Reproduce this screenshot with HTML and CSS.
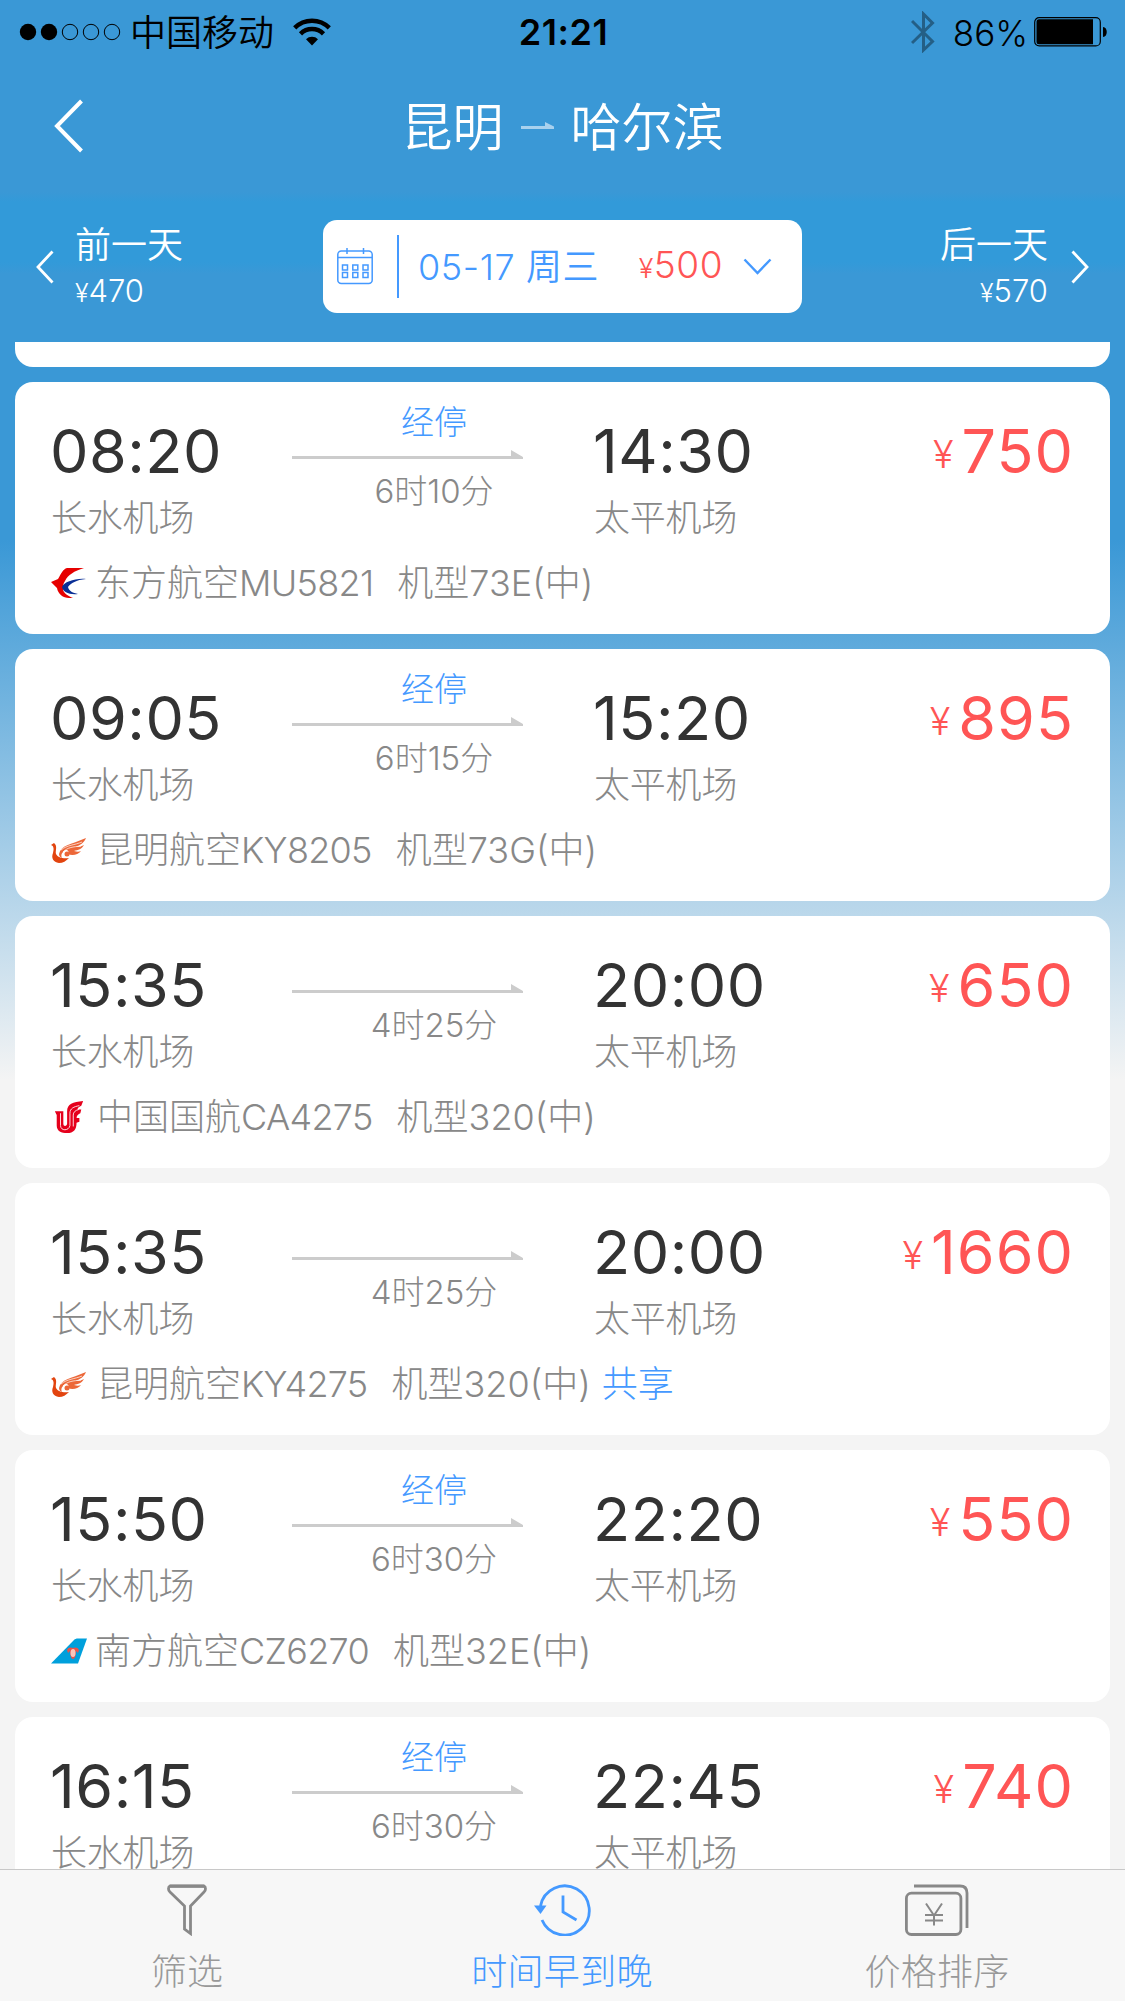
FILE: index.html
```
<!DOCTYPE html>
<html lang="zh-CN">

<head>
    <meta charset="UTF-8">
    <title>昆明 - 哈尔滨</title>
    <link rel="stylesheet" href="styles.css">
</head>

<body>
    <!-- 公用图标 -->
    <svg class="sprite" width="0" height="0">
        <symbol id="arrow" viewBox="0 0 231 9">
            <path d="M0 6h219V0l12 7V9H0z" fill="#ccc" />
        </symbol>
        <symbol id="logo-mu" viewBox="0 0 36 32">
            <path d="M33 1H16c-4 1-6 6-9 11l-7 3 6 6c1 6 6 10 12 10h4c-5-2-10-5-10-9 0-3 0-5 2-8 3-6 9-10 19-13z" fill="#e60000" />
            <path d="M35 12c-11-1-22 3-24 8 1 5 7 8 16 7-5-1-9-3-10-7 3-4 8-7 18-8z" fill="#0a2f96" />
        </symbol>
        <symbol id="logo-ky" viewBox="0 0 36 26">
            <path d="M0 8l3-2c4 3 1 8 2 11 2 4 8 5 13 4-3 3-6 5-10 5-6-1-8-5-6-10 1-4 1-7-2-8z" fill="#e2440f" />
            <path d="M8 17C10 8 19 8 35 1c-2 5-6 7-10 9 3 0 6-1 8-2-2 4-6 5-10 6 3 1 5 1 7 0-3 4-9 5-13 3 2-3-2-6-5-2-2 2-2 4-1 6-2-1-3-2-3-4z" fill="#ec6738" />
            <circle cx="16" cy="17" r="2.500" fill="#ec6738" />
            <path d="M10 13C16 8 24 8 31 5M12 15c5-5 10-5 18-6" fill="none" stroke="#fff" stroke-width=".7" />
        </symbol>
        <symbol id="logo-ca" viewBox="0 0 32 36">
            <path d="M31 1C20 2 14 4 14 12v13c0 3-4 4-4 0V12H1l2 4v11c0 6 5 8 11 8 7 0 10-4 10-11l3-1v-4h-3c0-3 2-4 4-5l1-4h-4c0-2 2-3 4-4z" fill="#e5001c" />
            <path d="M7 14v13c0 6 9 6 10 0V14c0-5 4-7 10-8M20.500 28V16c0-3 2-5 6-6" fill="none" stroke="#fff" stroke-width=".9" />
        </symbol>
        <symbol id="logo-cz" viewBox="0 0 36 26">
            <path d="M0 25.500L23 2c1-1 2-1.500 4-1.500h9l-9 25z" fill="#00a0dc" />
            <path d="M16 12c1-3 4-3 6-2 2-1 5-1 6 2l-1 3-2-2c0 4-1 8-3 8s-3-4-3-8l-2 2z" fill="#e8524a" />
            <ellipse cx="22" cy="15" rx="2.500" ry="4" fill="#f9c5bb" />
        </symbol>
    </svg>

    <div class="app">
        <!-- 状态栏 -->
        <div class="status-bar">
            <div class="status-left">
                <svg width="102" height="18" viewBox="0 0 102 18">
                    <circle cx="9" cy="9" r="8.200" />
                    <circle cx="30" cy="9" r="8.200" />
                    <g fill="none" stroke="#000">
                        <circle cx="51" cy="9" r="7.700" />
                        <circle cx="72" cy="9" r="7.700" />
                        <circle cx="93" cy="9" r="7.700" />
                    </g>
                </svg>
                <span class="carrier">中国移动</span>
                <svg class="wifi" width="38" height="28" viewBox="0 0 38 28">
                    <g fill="none" stroke="#000" stroke-width="4.500">
                        <path d="M1.700 9.800a24.500 24.500 0 0 1 34.600 0" />
                        <path d="M7.500 15.800a16.300 16.300 0 0 1 23 0" />
                    </g>
                    <path d="M19 27.500l-6-6.200a8.500 8.500 0 0 1 12 0z" />
                </svg>
            </div>
            <div class="clock">21:21</div>
            <div class="status-right">
                <svg width="24" height="42" viewBox="0 0 24 42">
                    <path d="M1 10l20.500 20.500L12.500 39V3l9 9L1 32" fill="none" stroke="#245f86" stroke-width="3" />
                </svg>
                <span class="percent">86%</span>
                <svg width="74" height="30" viewBox="0 0 74 30">
                    <rect x=".7" y=".7" width="65.600" height="28.200" rx="4.500" fill="none" stroke="#000" stroke-width="1.200" />
                    <path d="M5 2.300h54v25H5a2.500 2.500 0 0 1-2.500-2.500v-20A2.500 2.500 0 0 1 5 2.300zM69 10c5 0 5 10 0 10z" />
                </svg>
            </div>
        </div>

        <!-- 标题 -->
        <div class="title-bar">
            <svg class="back" width="30" height="54" viewBox="0 0 30 54">
                <path d="M27.500 2L3 27l24.500 25" fill="none" stroke="#fff" stroke-width="4" />
            </svg>
            <h1>
                <span>昆明</span>
                <svg width="33" height="8" viewBox="0 0 33 8">
                    <path d="M0 4h24V0l9 4.500V7H0z" fill="#a8d1ee" />
                </svg>
                <span>哈尔滨</span>
            </h1>
        </div>

        <!-- 日期切换 -->
        <div class="date-bar">
            <div class="day prev">
                <svg width="18" height="34" viewBox="0 0 18 34">
                    <path d="M16.500 1.500L2 17l14.500 15.500" fill="none" stroke="#fff" stroke-width="2.800" />
                </svg>
                <div class="day-text">
                    <p>前一天</p>
                    <p class="day-price"><small>¥</small>470</p>
                </div>
            </div>
            <div class="date-box">
                <svg class="calendar" width="36" height="38" viewBox="0 0 36 38">
                    <g fill="none" stroke="#49f" stroke-width="1.500">
                        <rect x=".8" y="4" width="34.400" height="32.500" rx="3.500" />
                        <path d="M1 10.500h34M10 1v6M26.500 1v6" />
                        <rect x="5.500" y="18" width="5" height="5" />
                        <rect x="15.800" y="18" width="5" height="5" />
                        <rect x="26" y="18" width="5" height="5" />
                        <rect x="5.500" y="25.500" width="5" height="5" />
                        <rect x="15.800" y="25.500" width="5" height="5" />
                        <rect x="26" y="25.500" width="5" height="5" />
                    </g>
                </svg>
                <span class="divider"></span>
                <span class="date">05-17 周三</span>
                <span class="date-price"><small>¥</small>500</span>
                <svg width="29" height="18" viewBox="0 0 29 18">
                    <path d="M1.500 1.500l13 13.500 13-13.500" fill="none" stroke="#49f" stroke-width="2.400" />
                </svg>
            </div>
            <div class="day next">
                <div class="day-text">
                    <p>后一天</p>
                    <p class="day-price"><small>¥</small>570</p>
                </div>
                <svg width="18" height="34" viewBox="0 0 18 34">
                    <path d="M1.500 1.500L16 17 1.500 32.500" fill="none" stroke="#fff" stroke-width="2.800" />
                </svg>
            </div>
        </div>

        <!-- 航班列表 -->
        <div class="list">
            <div class="card card-cut"></div>

            <div class="card">
                <div class="route">
                    <div class="place">
                        <div class="time">08:20</div>
                        <div class="airport">长水机场</div>
                    </div>
                    <div class="middle">
                        <div class="stop">经停</div>
                        <svg width="231" height="9"><use href="#arrow" /></svg>
                        <div class="duration">6时10分</div>
                    </div>
                    <div class="place">
                        <div class="time">14:30</div>
                        <div class="airport">太平机场</div>
                    </div>
                    <div class="price"><small>¥</small>750</div>
                </div>
                <div class="airline">
                    <svg class="logo" width="36" height="32"><use href="#logo-mu" /></svg>
                    <span>东方航空<i>MU5821</i></span>
                    <span class="model">机型73E(中)</span>
                </div>
            </div>

            <div class="card">
                <div class="route">
                    <div class="place">
                        <div class="time">09:05</div>
                        <div class="airport">长水机场</div>
                    </div>
                    <div class="middle">
                        <div class="stop">经停</div>
                        <svg width="231" height="9"><use href="#arrow" /></svg>
                        <div class="duration">6时15分</div>
                    </div>
                    <div class="place">
                        <div class="time">15:20</div>
                        <div class="airport">太平机场</div>
                    </div>
                    <div class="price"><small>¥</small>895</div>
                </div>
                <div class="airline">
                    <svg class="logo wide" width="36" height="26"><use href="#logo-ky" /></svg>
                    <span>昆明航空<i>KY8205</i></span>
                    <span class="model">机型73G(中)</span>
                </div>
            </div>

            <div class="card">
                <div class="route">
                    <div class="place">
                        <div class="time">15:35</div>
                        <div class="airport">长水机场</div>
                    </div>
                    <div class="middle">
                        <div class="stop"></div>
                        <svg width="231" height="9"><use href="#arrow" /></svg>
                        <div class="duration">4时25分</div>
                    </div>
                    <div class="place">
                        <div class="time">20:00</div>
                        <div class="airport">太平机场</div>
                    </div>
                    <div class="price"><small>¥</small>650</div>
                </div>
                <div class="airline">
                    <svg class="logo wide" width="36" height="34"><use href="#logo-ca" /></svg>
                    <span>中国国航<i>CA4275</i></span>
                    <span class="model">机型320(中)</span>
                </div>
            </div>

            <div class="card">
                <div class="route">
                    <div class="place">
                        <div class="time">15:35</div>
                        <div class="airport">长水机场</div>
                    </div>
                    <div class="middle">
                        <div class="stop"></div>
                        <svg width="231" height="9"><use href="#arrow" /></svg>
                        <div class="duration">4时25分</div>
                    </div>
                    <div class="place">
                        <div class="time">20:00</div>
                        <div class="airport">太平机场</div>
                    </div>
                    <div class="price"><small>¥</small>1660</div>
                </div>
                <div class="airline">
                    <svg class="logo wide" width="36" height="26"><use href="#logo-ky" /></svg>
                    <span>昆明航空<i>KY4275</i></span>
                    <span class="model">机型320(中)</span>
                    <span class="share">共享</span>
                </div>
            </div>

            <div class="card">
                <div class="route">
                    <div class="place">
                        <div class="time">15:50</div>
                        <div class="airport">长水机场</div>
                    </div>
                    <div class="middle">
                        <div class="stop">经停</div>
                        <svg width="231" height="9"><use href="#arrow" /></svg>
                        <div class="duration">6时30分</div>
                    </div>
                    <div class="place">
                        <div class="time">22:20</div>
                        <div class="airport">太平机场</div>
                    </div>
                    <div class="price"><small>¥</small>550</div>
                </div>
                <div class="airline">
                    <svg class="logo" width="36" height="26"><use href="#logo-cz" /></svg>
                    <span>南方航空<i>CZ6270</i></span>
                    <span class="model">机型32E(中)</span>
                </div>
            </div>

            <div class="card">
                <div class="route">
                    <div class="place">
                        <div class="time">16:15</div>
                        <div class="airport">长水机场</div>
                    </div>
                    <div class="middle">
                        <div class="stop">经停</div>
                        <svg width="231" height="9"><use href="#arrow" /></svg>
                        <div class="duration">6时30分</div>
                    </div>
                    <div class="place">
                        <div class="time">22:45</div>
                        <div class="airport">太平机场</div>
                    </div>
                    <div class="price"><small>¥</small>740</div>
                </div>
            </div>
        </div>

        <!-- 底部菜单 -->
        <div class="tab-bar">
            <div class="tab">
                <svg width="40" height="52" viewBox="0 0 40 52">
                    <path d="M3 2h34c2 1 2 4 0 6L23.500 22v27.500l-6-4.500V22L3 8C1 6 1 3 3 2z" fill="none" stroke="#888" stroke-width="2.800" />
                    <path d="M3 2.200h34" stroke="#888" stroke-width="3" />
                </svg>
                <span>筛选</span>
            </div>
            <div class="tab active">
                <svg width="57" height="52" viewBox="0 0 57 52">
                    <g fill="none" stroke="#49f" stroke-width="2.800">
                        <path d="M6.500 22A24.600 24.600 0 1 1 8 36" />
                        <path d="M29 11.500V28l13.500 8" />
                    </g>
                    <path d="M0 21.500h12.500L6.500 30z" fill="#49f" />
                </svg>
                <span>时间早到晚</span>
            </div>
            <div class="tab">
                <svg width="64" height="52" viewBox="0 0 64 52">
                    <g fill="none" stroke="#888" stroke-width="2.800">
                        <rect x="1.400" y="9.200" width="54.500" height="41.300" rx="5" />
                        <path d="M9 2h46c5 0 7 3 7 7v35" />
                        <path d="M21 19.500l8 12 8-12M29 31v10.500M20 31h18M20 36.500h18" stroke-width="2" />
                    </g>
                </svg>
                <span>价格排序</span>
            </div>
        </div>
    </div>
</body>

</html>
```
FILE: styles.css
```
/* 全局样式 */
* {
    box-sizing: border-box;
}

body {
    margin: 0;
    font-family: 'Inter', 'Noto Sans CJK SC', sans-serif;
    font-weight: 300;
    background-color: #f4f4f4;
    color: #333;
}

p,
h1 {
    margin: 0;
    font-weight: inherit;
}

svg {
    display: block;
    flex: none;
}

i {
    font-style: normal;
    letter-spacing: -0.7px;
}

.sprite {
    position: absolute;
}

.app {
    display: flex;
    flex-direction: column;
    width: 1125px;
    height: 2001px;
    overflow: hidden;
    white-space: nowrap;
    background: linear-gradient(#3a98d6 0, #3a98d6 540px, #f4f4f4 1080px);
}

/* 状态栏 */
.status-bar {
    display: grid;
    grid-template-columns: 1fr auto 1fr;
    align-items: center;
    height: 61px;
    padding: 0 17px 0 19px;
    color: #000;
    font-size: 35px;
    line-height: 61px;
}

.status-left,
.status-right {
    display: flex;
    align-items: center;
}

.status-right {
    justify-content: flex-end;
}

.carrier {
    margin: 0 19px 0 9px;
    padding-top: 3px;
    font-size: 36px;
    font-weight: 350;
}

.wifi {
    margin-bottom: 1px;
}

.clock {
    padding-top: 1px;
    font-size: 36px;
    font-weight: 600;
    letter-spacing: 0.5px;
}

.percent {
    margin: 0 6px 0 18px;
    padding-top: 2px;
    font-weight: 350;
}

/* 标题 */
.title-bar {
    display: grid;
    grid-template-columns: 1fr auto 1fr;
    align-items: center;
    height: 131px;
    padding: 0 54px 1px;
    color: #fff;
}

h1 {
    display: flex;
    align-items: center;
    gap: 17px;
    font-size: 51px;
    font-weight: 350;
    line-height: 64px;
}

h1 span {
    padding-top: 4px;
}

/* 日期切换 */
.date-bar {
    display: flex;
    justify-content: space-between;
    height: 150px;
    padding: 28px 36px 0;
    color: #fff;
    font-weight: 350;
    background: linear-gradient(#3a98d6, #329ad9 10px, #329ad9 70px, #3a98d6 82px);
}

.day {
    display: flex;
    align-items: center;
    gap: 21px;
    width: 240px;
    height: 93px;
    font-size: 36px;
    line-height: 46px;
}

.day-text {
    padding-top: 5px;
}

.next {
    justify-content: flex-end;
    gap: 23px;
    text-align: right;
}

.day-price {
    font-size: 31px;
}

.day-price small {
    font-size: 25px;
}

.date-box {
    display: flex;
    align-items: center;
    width: 479px;
    height: 93px;
    padding: 0 30px 0 14px;
    border-radius: 14px;
    background-color: #fff;
    color: #49f;
    font-size: 36px;
    line-height: 46px;
}

.calendar {
    margin-bottom: 2px;
}

.divider {
    width: 2px;
    height: 63px;
    margin: 0 19px 0 24px;
    background-color: #49f;
}

.date {
    letter-spacing: 0.6px;
}

.date-price {
    margin-left: auto;
    margin-right: 20px;
    color: #f55;
    font-size: 37px;
    letter-spacing: 0.5px;
}

.date-price small {
    font-size: 27px;
}

/* 航班列表 */
.list {
    display: flex;
    flex: 1;
    flex-direction: column;
    gap: 15px;
    min-height: 0;
    padding: 0 15px;
    overflow: hidden;
}

.card {
    flex: none;
    height: 252px;
    padding: 0 36px;
    border-radius: 18px;
    background-color: #fff;
}

.card-cut {
    height: 25px;
    border-radius: 0 0 18px 18px;
}

.route {
    display: grid;
    grid-template-columns: 241px 302px 1fr auto;
}

.place,
.price {
    padding-top: 38px;
}

.time,
.price {
    font-size: 61px;
    font-weight: 400;
    line-height: 62px;
}

.time {
    margin-left: -1px;
    letter-spacing: 0.5px;
}

.airport {
    margin-top: 14px;
    font-size: 36px;
    line-height: 44px;
    letter-spacing: -0.2px;
    color: #888;
}

.middle {
    width: 231px;
    padding-top: 20px;
    font-size: 33px;
    line-height: 40px;
}

.stop,
.duration {
    padding-left: 53px;
    text-align: center;
}

.stop {
    height: 40px;
    margin-bottom: 8px;
    color: #49f;
}

.duration {
    margin-top: 12px;
    color: #888;
}

.price {
    display: flex;
    color: #f55;
    letter-spacing: 1px;
}

.price small {
    margin-right: 7px;
    padding-top: 3px;
    font-size: 38px;
    font-weight: 300;
}

.airline {
    display: flex;
    align-items: center;
    height: 44px;
    margin-top: 21px;
    font-size: 36px;
    line-height: 44px;
    color: #888;
}

.logo {
    margin-right: 8px;
}

.wide {
    margin-right: 10px;
}

.model {
    margin-left: 24px;
}

.share {
    margin-left: 11px;
    color: #49f;
}

/* 底部菜单 */
.tab-bar {
    display: grid;
    grid-template-columns: repeat(3, 1fr);
    height: 132px;
    border-top: 1px solid #c8c8c8;
    background-color: #f7f7f7;
}

.tab {
    display: flex;
    flex-direction: column;
    align-items: center;
    gap: 11px;
    padding: 14px 1px 0 0;
    font-size: 36px;
    line-height: 50px;
    letter-spacing: 0.3px;
    color: #999;
}

.active {
    color: #49f;
}
```
